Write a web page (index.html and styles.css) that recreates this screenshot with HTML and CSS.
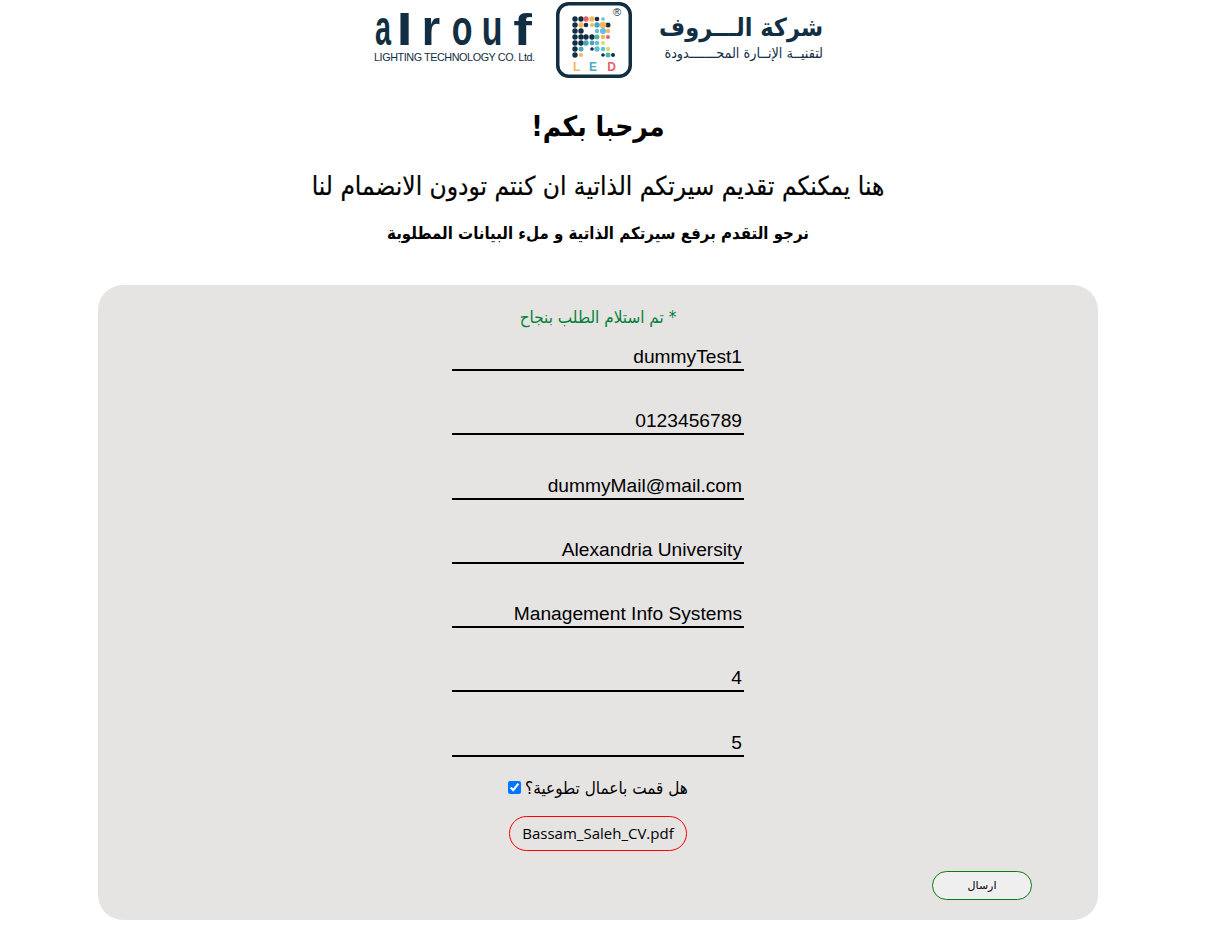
FILE: index.html
```html
<!DOCTYPE html>
<html lang="ar">
<head>
<meta charset="utf-8">
<title>Alrouf</title>
<link rel="stylesheet" href="styles.css">
</head>
<body>
<div class="page">
  <header class="logo">
    <div class="logo-en">
      <div class="brand"><span class="ch-a">a</span><span class="ch-l">l</span><span class="ch-r">r</span><span class="ch-o">o</span><span class="ch-u">u</span><span class="ch-f">f</span></div>
      <div class="brand-sub">LIGHTING TECHNOLOGY CO. Ltd.</div>
    </div>
    <svg class="mark" width="78" height="78" viewBox="0 0 78 78">
      <rect x="2.750" y="2.750" width="72.500" height="72.500" rx="11" fill="#fff" stroke="#122e42" stroke-width="3.500"/>
      <g fill="#122e42">
        <circle cx="20" cy="18" r="2.700"/><circle cx="26" cy="18" r="2.700"/><circle cx="42" cy="18" r="2.300"/>
        <circle cx="20" cy="24" r="2.700"/><circle cx="31" cy="24" r="2.300"/><circle cx="53" cy="24" r="2.500"/>
        <circle cx="20" cy="30" r="2.700"/><circle cx="26" cy="30" r="2.700"/>
        <circle cx="20" cy="36" r="2.700"/><circle cx="26" cy="36" r="2.700"/><circle cx="31" cy="36" r="2.700"/><circle cx="37" cy="36" r="2.700"/>
        <circle cx="20" cy="42" r="2.700"/><circle cx="26" cy="42" r="2.700"/>
        <circle cx="20" cy="48" r="2.700"/><circle cx="37" cy="48" r="1.800"/>
        <circle cx="20" cy="54" r="2.700"/><circle cx="48" cy="54" r="1.800"/><circle cx="58" cy="54" r="2"/>
      </g>
      <g fill="#e8616a"><circle cx="31" cy="18" r="2.700"/><circle cx="53" cy="36" r="2"/></g>
      <g fill="#f6b560"><circle cx="37" cy="18" r="2.700"/><circle cx="26" cy="24" r="2.700"/><circle cx="37" cy="24" r="2"/><circle cx="48" cy="24" r="3.300"/><circle cx="53" cy="30" r="2.200"/><circle cx="48" cy="36" r="2.300"/><circle cx="26" cy="54" r="2"/></g>
      <g fill="#5fc0d6"><circle cx="48" cy="18" r="1.800"/><circle cx="42" cy="30" r="2.200"/><circle cx="48" cy="30" r="3"/><circle cx="42" cy="42" r="2.300"/><circle cx="42" cy="48" r="2.700"/><circle cx="48" cy="48" r="2.200"/></g>
      <g fill="#4aa5b8"><circle cx="42" cy="24" r="2.700"/><circle cx="31" cy="42" r="2.700"/><circle cx="37" cy="42" r="2.400"/><circle cx="26" cy="48" r="2.500"/></g>
      <g fill="#4fb89f"><circle cx="42" cy="36" r="2.500"/><circle cx="53" cy="54" r="2.500"/></g>
      <g fill="#d8dc6a"><circle cx="48" cy="42" r="2"/><circle cx="53" cy="48" r="2.200"/></g>
      <text x="62" y="15" class="reg" text-anchor="middle">®</text>
      <text x="18" y="70" class="led led-l">L</text>
      <text x="38" y="70" class="led led-e" text-anchor="middle">E</text>
      <text x="61" y="70" class="led led-d" text-anchor="end">D</text>
    </svg>
    <div class="logo-ar">
      <div class="brand-ar">شركة الـــروف</div>
      <div class="brand-ar-sub">لتقنيــة الإنــارة المحـــــــدودة</div>
    </div>
  </header>

  <h1 class="title">مرحبا بكم!</h1>
  <h2 class="subtitle">هنا يمكنكم تقديم سيرتكم الذاتية ان كنتم تودون الانضمام لنا</h2>
  <h3 class="hint">نرجو التقدم برفع سيرتكم الذاتية و ملء البيانات المطلوبة</h3>

  <form class="card">
    <p class="status">* تم استلام الطلب بنجاح</p>
    <div class="fields">
      <input class="field" type="text" value="dummyTest1">
      <input class="field" type="text" value="0123456789">
      <input class="field" type="text" value="dummyMail@mail.com">
      <input class="field" type="text" value="Alexandria University">
      <input class="field" type="text" value="Management Info Systems">
      <input class="field" type="text" value="4">
      <input class="field" type="text" value="5">
    </div>
    <label class="volunteer"><span>هل قمت باعمال تطوعية؟</span><input class="check" type="checkbox" checked></label>
    <div class="file">Bassam_Saleh_CV.pdf</div>
    <div class="actions"><button class="send" type="button">ارسال</button></div>
  </form>
</div>
</body>
</html>
```
FILE: styles.css
```css
* { box-sizing: border-box; }
html, body { margin: 0; padding: 0; background: #fff; }
body { font-family: "DejaVu Sans", sans-serif; font-stretch: condensed; color: #000; }
.page { width: 1196px; display: flex; flex-direction: column; align-items: center; }

.logo { height: 84px; width: 460px; display: flex; align-items: flex-start; color: #122e42; padding-left: 5px; }
.logo-en { width: 176px; }
.brand { font-family: "Liberation Sans", sans-serif; font-weight: 700; font-size: 40px; line-height: 24px; height: 43px; padding-top: 19px; display: flex; margin-left: -1.500px; }
.brand span { display: block; transform-origin: 50% 25.900px; }
.ch-a { transform: scale(.72, 1.23); margin-right: 5px; }
.ch-l { transform: scale(1.5, 1.1); margin-right: 13px; }
.ch-r { transform: scale(1.2, 1.23); margin-right: 11.500px; }
.ch-o { transform: scale(.85, 1.23); margin-right: 5.600px; }
.ch-u { transform: scale(.85, 1.23); margin-right: 11.600px; }
.ch-f { transform: scale(1.4, 1.1); }
.brand-sub { font-family: "Liberation Sans", sans-serif; font-size: 10.800px; line-height: 14px; letter-spacing: -.42px; white-space: nowrap; margin-top: 7px; padding-left: 1px; }
.mark { flex: none; margin-left: 6px; margin-top: 1px; }
.reg { font-family: "Liberation Sans", sans-serif; font-size: 11px; fill: #122e42; }
.led { font-family: "Liberation Sans", sans-serif; font-size: 12px; font-weight: 700; }
.led-l { fill: #f6b560; }
.led-e { fill: #4fa9c4; }
.led-d { fill: #e8616a; }
.logo-ar { margin-left: 25px; width: 165px; margin-top: 11px; text-align: right; direction: rtl; }
.brand-ar { font-weight: 700; font-size: 25px; line-height: 34px; white-space: nowrap; }
.brand-ar-sub { font-size: 14.300px; line-height: 18px; white-space: nowrap; margin-top: -1px; }

.title, .subtitle, .hint { margin: 0; direction: rtl; text-align: center; }
.title { font-size: 28px; font-weight: 700; line-height: 44px; margin-top: 21px; }
.subtitle { font-size: 26px; font-weight: 400; line-height: 32px; margin-top: 21px; -webkit-text-stroke: .2px #000; }
.hint { font-size: 16.700px; font-weight: 700; line-height: 26px; margin-top: 18px; }

.card { width: 1000px; height: 635px; margin-top: 39px; background: #e5e4e3; border-radius: 25px; display: flex; flex-direction: column; align-items: center; }
.status { margin: 0; padding-top: 22px; height: 58px; font-size: 17px; line-height: 20px; direction: rtl; color: #058038; }
.fields { display: flex; flex-direction: column; gap: 36.300px; }
.field { display: block; width: 292px; height: 28px; background: transparent; border: 0; border-bottom: 2px solid #000; outline: 0; padding: 2px 2px 0; font-family: "Liberation Sans", sans-serif; font-size: 19.200px; line-height: 26px; text-align: right; color: #000; }
.volunteer { display: flex; align-items: center; gap: 4px; margin-top: 19px; height: 24px; font-size: 17px; line-height: 24px; flex-direction: row-reverse; }
.volunteer span { direction: rtl; }
.check { width: 13px; height: 13px; margin: 0; }
.file { margin-top: 16px; width: 178px; height: 35px; border: 1px solid #f00; border-radius: 18px; display: flex; align-items: center; justify-content: center; font-family: "Open Sans", sans-serif; font-stretch: normal; font-size: 15px; white-space: nowrap; }
.actions { width: 100%; display: flex; justify-content: flex-end; padding-right: 66px; margin-top: 20px; }
.send { width: 100px; height: 29px; padding: 0; border: 1px solid #0a7d12; border-radius: 15px; background: #efefef; color: #000; font-family: "DejaVu Sans", sans-serif; font-size: 11px; direction: rtl; }
```
